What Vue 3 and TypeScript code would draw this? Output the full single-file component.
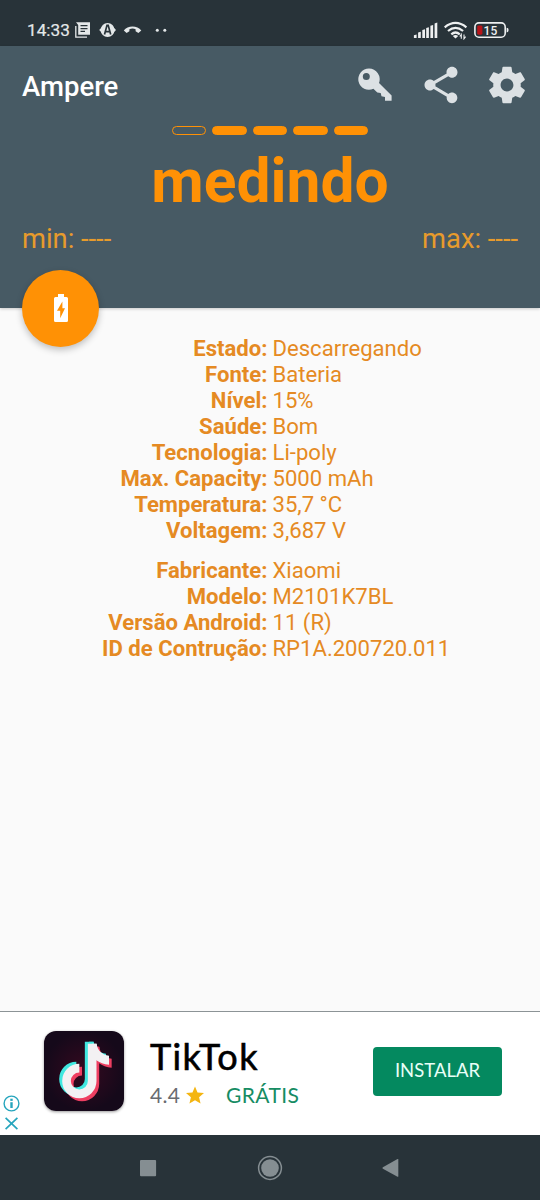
<template>
  <div class="screen">
    <div class="status-bar">
      <span class="clock">14:33</span>
      <svg class="status-left" width="94" height="20" viewBox="74 20 94 20">
        <path d="M75.8 26V37.2H87" class="line" />
        <path d="M76 22.3H90V34.8H78.2V25Z" fill="#e4e8e9" />
        <path d="M80.5 25.7H87.5M80.5 28.6H87.5M80.5 31.4H85" stroke="#283339" stroke-width="1.3" />
        <circle cx="107.6" cy="30" r="6.9" fill="#e4e8e9" />
        <path d="M99.2 30 102 27V33ZM116 30 113.2 27V33Z" fill="#e4e8e9" />
        <path d="M104.5 34.5 107 25.3H108.2L110.7 34.5M105.6 31.6H109.6" fill="none" stroke="#283339" stroke-width="1.7" />
        <path d="M123.8 30.4C127.7 25.3 137.3 25.3 141.3 30.4L138.4 33 135.6 31.2V29.2C133.7 28.4 131.3 28.4 129.4 29.2V31.2L126.6 33Z" fill="#e4e8e9" />
        <circle cx="157.3" cy="30.2" r="1.5" fill="#e4e8e9" />
        <circle cx="164.8" cy="30.2" r="1.5" fill="#e4e8e9" />
      </svg>
      <svg class="status-right" width="98" height="20" viewBox="412 20 98 20">
        <path
          v-for="(bar, i) in signalBars"
          :key="i"
          :d="`M${bar.x} 38V${bar.top + 0.8}L${bar.x + 2.7} ${bar.top}V38Z`"
          fill="#eef0f1"
        />
        <g fill="none" stroke="#eef0f1" stroke-width="2.2">
          <path d="M444.7 27.3Q455.5 18.6 466.4 27.3" />
          <path d="M448 31Q455.5 24.8 463.1 31" />
          <path d="M451.3 34.4Q455.5 30.6 459.8 34.4" />
        </g>
        <path d="M452.8 36Q455.5 33.8 458.2 36L455.5 38.6Z" fill="#eef0f1" />
        <path d="M461.3 38.8V34.4L459.8 36.5M464 34.4V38.8L465.6 36.7" fill="none" stroke="#eef0f1" stroke-width="1.1" />
        <rect x="474.9" y="22.9" width="30.3" height="14.3" rx="4" fill="none" stroke="#eef0f1" stroke-width="1.6" />
        <path d="M506.6 27.7Q508.6 27.7 508.6 30T506.6 32.4Z" fill="#eef0f1" />
        <rect x="477.2" y="25.4" width="5.2" height="9.3" rx="1.4" fill="#b71419" />
        <text x="483.6" y="34.6" class="battery-text">15</text>
      </svg>
    </div>

    <header class="header">
      <div class="toolbar">
        <h1>Ampere</h1>
        <div class="actions">
          <svg width="36" height="36" viewBox="357 67 36 36">
            <path
              fill-rule="evenodd"
              d="M369 68.6a10.6 10.6 0 1 0 4.4 20.2L377.3 92.6 380.7 93 381.5 96.3 385 97.1V100.8H391.6V95.5L379 83A10.6 10.6 0 0 0 369 68.6ZM366.3 72.9a3.5 3.5 0 1 1 0 7 3.5 3.5 0 0 1 0-7Z"
            />
          </svg>
          <svg width="44" height="44" viewBox="0 0 24 24">
            <path d="M18 16.08c-.76 0-1.44.3-1.96.77L8.91 12.7c.05-.23.09-.46.09-.7s-.04-.47-.09-.7l7.05-4.11c.54.5 1.25.81 2.04.81 1.66 0 3-1.34 3-3s-1.34-3-3-3-3 1.34-3 3c0 .24.04.47.09.7L8.04 9.81C7.5 9.31 6.79 9 6 9c-1.66 0-3 1.34-3 3s1.34 3 3 3c.79 0 1.5-.31 2.04-.81l7.12 4.16c-.05.21-.08.43-.08.65 0 1.61 1.31 2.92 2.92 2.92s2.92-1.31 2.92-2.92-1.31-2.92-2.92-2.92z" />
          </svg>
          <svg width="44" height="44" viewBox="0 0 24 24">
            <path d="M19.43 12.98c.04-.32.07-.64.07-.98s-.03-.66-.07-.98l2.11-1.65c.19-.15.24-.42.12-.64l-2-3.46c-.12-.22-.39-.3-.61-.22l-2.49 1c-.52-.4-1.08-.73-1.69-.98l-.38-2.65C14.46 2.18 14.25 2 14 2h-4c-.25 0-.46.18-.49.42l-.38 2.65c-.61.25-1.17.59-1.69.98l-2.49-1c-.23-.09-.49 0-.61.22l-2 3.46c-.13.22-.07.49.12.64l2.11 1.65c-.04.32-.07.65-.07.98s.03.66.07.98l-2.11 1.65c-.19.15-.24.42-.12.64l2 3.46c.12.22.39.3.61.22l2.49-1c.52.4 1.08.73 1.69.98l.38 2.65c.03.24.24.42.49.42h4c.25 0 .46-.18.49-.42l.38-2.65c.61-.25 1.17-.59 1.69-.98l2.49 1c.23.09.49 0 .61-.22l2-3.46c.12-.22.07-.49-.12-.64l-2.11-1.65zM12 15.5c-1.93 0-3.5-1.57-3.5-3.5s1.57-3.5 3.5-3.5 3.5 1.57 3.5 3.5-1.57 3.5-3.5 3.5z" />
          </svg>
        </div>
      </div>
      <div class="level">
        <span v-for="n in 5" :key="n" :class="['segment', { filled: n > 1 }]"></span>
      </div>
      <div class="reading">medindo</div>
      <div class="range">
        <span>min: ----</span>
        <span>max: ----</span>
      </div>
      <button class="fab">
        <svg width="16" height="30" viewBox="0 0 16 30">
          <path fill="#fff" fill-rule="evenodd" d="M5 1H11V4H13.5Q15 4 15 5.5V27.5Q15 29 13.5 29H2.5Q1 29 1 27.5V5.5Q1 4 2.5 4H5ZM9.4 8.5 4 17.8H7.2V25.2L12 15.2H9.4Z" />
        </svg>
      </button>
    </header>

    <main class="details">
      <dl v-for="(group, g) in details" :key="g">
        <template v-for="item in group" :key="item.label">
          <dt>{{ item.label }}:</dt>
          <dd>{{ item.value }}</dd>
        </template>
      </dl>
    </main>

    <section class="ad">
      <div class="ad-marks">
        <svg width="17" height="17" viewBox="0 0 17 17">
          <circle cx="8.5" cy="8.5" r="7.4" />
          <path d="M8.5 7.2V13" stroke-width="2.4" />
          <path d="M8.5 3.7V5.9" stroke-width="2.4" />
        </svg>
        <svg width="17" height="17" viewBox="0 0 17 17">
          <path d="M2.6 2.8 14.4 14.2M14.4 2.8 2.6 14.2" stroke-width="1.7" />
        </svg>
      </div>
      <svg class="app-icon" width="80" height="80" viewBox="132 93 240 240">
        <defs>
          <radialGradient id="glow">
            <stop offset="0" stop-color="#35091f" />
            <stop offset="1" stop-color="#15091a" />
          </radialGradient>
          <g id="note">
            <path d="M276.5 131V243A38.5 38.5 0 1 1 238 204.5" fill="none" stroke="currentColor" stroke-width="26" />
            <path d="M276 131H290C292 150 306 165 327 167V194C312 193 299 188 288 180Z" fill="currentColor" />
          </g>
        </defs>
        <rect x="132" y="93" width="240" height="240" fill="url(#glow)" />
        <use href="#note" x="8" y="9" color="#ee3e61" />
        <use href="#note" x="-9" y="-6" color="#40e8e0" />
        <use href="#note" color="#f3f1f3" />
      </svg>
      <div class="ad-info">
        <div class="ad-title">TikTok</div>
        <div class="ad-meta">
          <span class="rating">4.4</span>
          <svg width="18" height="18" viewBox="2 2 20 19">
            <path fill="#f4b511" d="M12 17.27 18.18 21l-1.64-7.03L22 9.24l-7.19-.61L12 2 9.19 8.63 2 9.24l5.46 4.73L5.82 21z" />
          </svg>
          <span class="price">GRÁTIS</span>
        </div>
      </div>
      <button class="install">INSTALAR</button>
    </section>

    <nav class="nav-bar">
      <svg width="26" height="26" viewBox="0 0 26 26">
        <rect x="5" y="5" width="16.1" height="16.3" rx="1" />
      </svg>
      <svg width="26" height="26" viewBox="0 0 26 26">
        <circle cx="13" cy="13" r="8.8" />
        <circle cx="13" cy="13" r="11.4" fill="none" stroke="#858e92" stroke-width="1.5" />
      </svg>
      <svg width="26" height="26" viewBox="1.7 0 26 26">
        <path d="M5.6 12.2 20.2 4Q21 3.8 21 4.6V21.2Q21 22 20.2 21.8L5.6 13.8Q4.6 13 5.6 12.2Z" />
      </svg>
    </nav>
  </div>
</template>

<script setup lang="ts">
interface Detail {
  label: string
  value: string
}

const signalBars = [
  { x: 413.9, top: 34.5 },
  { x: 418.1, top: 31.8 },
  { x: 422.3, top: 29.3 },
  { x: 426.2, top: 27.2 },
  { x: 430.4, top: 25 },
  { x: 434.6, top: 22.6 }
]

const details: Detail[][] = [
  [
    { label: 'Estado', value: 'Descarregando' },
    { label: 'Fonte', value: 'Bateria' },
    { label: 'Nível', value: '15%' },
    { label: 'Saúde', value: 'Bom' },
    { label: 'Tecnologia', value: 'Li-poly' },
    { label: 'Max. Capacity', value: '5000 mAh' },
    { label: 'Temperatura', value: '35,7 °C' },
    { label: 'Voltagem', value: '3,687 V' }
  ],
  [
    { label: 'Fabricante', value: 'Xiaomi' },
    { label: 'Modelo', value: 'M2101K7BL' },
    { label: 'Versão Android', value: '11 (R)' },
    { label: 'ID de Contrução', value: 'RP1A.200720.011' }
  ]
]
</script>

<style>
body {
  margin: 0;
}
</style>

<style scoped>
.screen {
  width: 540px;
  height: 1200px;
  display: flex;
  flex-direction: column;
  overflow: hidden;
  background: #fafafa;
  font-family: Roboto, sans-serif;
}
svg {
  display: block;
  flex-shrink: 0;
}
button {
  border: none;
  padding: 0;
}
.status-bar {
  height: 46px;
  flex-shrink: 0;
  box-sizing: border-box;
  padding: 20px 30px 0 27px;
  display: flex;
  background: #283339;
}
.clock {
  width: 47px;
  font-size: 17.2px;
  font-weight: 400;
  line-height: 20px;
  color: #e4e8e9;
  white-space: nowrap;
  -webkit-text-stroke: 0.2px #e4e8e9;
}
.line {
  fill: none;
  stroke: #e4e8e9;
  stroke-width: 1.3;
}
.status-right {
  margin-left: auto;
}
.battery-text {
  font-size: 12px;
  font-weight: 500;
  fill: #eef0f1;
}
.header {
  position: relative;
  height: 262px;
  flex-shrink: 0;
  background: #475a64;
  color: #ff9105;
  box-shadow: 0 1px 3px rgba(0, 0, 0, 0.2);
}
.toolbar {
  height: 78px;
  display: flex;
  align-items: center;
  justify-content: space-between;
  padding: 0 11px 0 22px;
}
h1 {
  margin: 3px 0 0;
  font-size: 27.5px;
  font-weight: 500;
  color: #fff;
}
.actions {
  display: flex;
  align-items: center;
  gap: 22px;
  fill: #dce1e4;
}
.actions svg:first-child {
  margin-right: 4px;
}
.level {
  display: flex;
  justify-content: center;
  gap: 6px;
  padding-top: 2px;
}
.segment {
  width: 34.5px;
  height: 9px;
  box-sizing: border-box;
  border: 1px solid #ff9105;
  border-radius: 5px;
}
.filled {
  background: #ff9105;
}
.reading {
  margin-top: 11px;
  font-size: 60.5px;
  font-weight: 700;
  line-height: 72px;
  text-align: center;
}
.range {
  display: flex;
  justify-content: space-between;
  padding: 5px 22px 0;
  font-size: 27.3px;
  line-height: 32px;
  color: #e79b2c;
}
.fab {
  position: absolute;
  left: 22px;
  bottom: -38.5px;
  width: 77px;
  height: 77px;
  display: flex;
  align-items: center;
  justify-content: center;
  border-radius: 50%;
  background: #ff9105;
  box-shadow: 0 3px 7px rgba(0, 0, 0, 0.24);
}
.details {
  flex: 1;
  padding-top: 27px;
  font-size: 22.1px;
  line-height: 26px;
  color: #e58a23;
}
dl {
  display: grid;
  grid-template-columns: 267.5px 1fr;
  column-gap: 5px;
  margin: 0 0 14px;
}
dt {
  font-weight: 700;
  text-align: right;
}
dd {
  margin: 0;
}
.ad {
  height: 124px;
  flex-shrink: 0;
  box-sizing: border-box;
  display: flex;
  align-items: flex-start;
  padding: 19px 38px 0 3px;
  border-top: 1px solid #8c9396;
  background: #fff;
  font-family: Lato, sans-serif;
}
.ad-marks {
  display: flex;
  flex-direction: column;
  gap: 3px;
  margin-top: 64px;
  fill: none;
  stroke: #26a5bd;
  stroke-width: 1.4;
}
.app-icon {
  margin-left: 24px;
  border-radius: 12px;
  box-shadow: 0 1px 3px rgba(0, 0, 0, 0.4);
}
.ad-info {
  margin-left: 26px;
}
.ad-title {
  margin-top: 4px;
  font-size: 36px;
  line-height: 42px;
  letter-spacing: 1.4px;
  color: #000;
  -webkit-text-stroke: 0.6px #000;
}
.ad-meta {
  display: flex;
  align-items: center;
  margin-top: 5px;
  font-size: 21px;
  line-height: 26px;
}
.rating {
  width: 36px;
  letter-spacing: 0.3px;
  color: #696b70;
}
.price {
  margin-left: 22px;
  letter-spacing: 0.4px;
  color: #168c63;
}
.install {
  width: 129px;
  height: 49px;
  margin: 15.5px 0 0 auto;
  padding-bottom: 3px;
  border-radius: 4px;
  background: #04895f;
  color: #e9fff7;
  font-family: Lato, sans-serif;
  font-size: 18.5px;
}
.nav-bar {
  height: 65px;
  flex-shrink: 0;
  display: flex;
  align-items: center;
  justify-content: center;
  gap: 96px;
  background: #283339;
  fill: #858e92;
}
</style>
